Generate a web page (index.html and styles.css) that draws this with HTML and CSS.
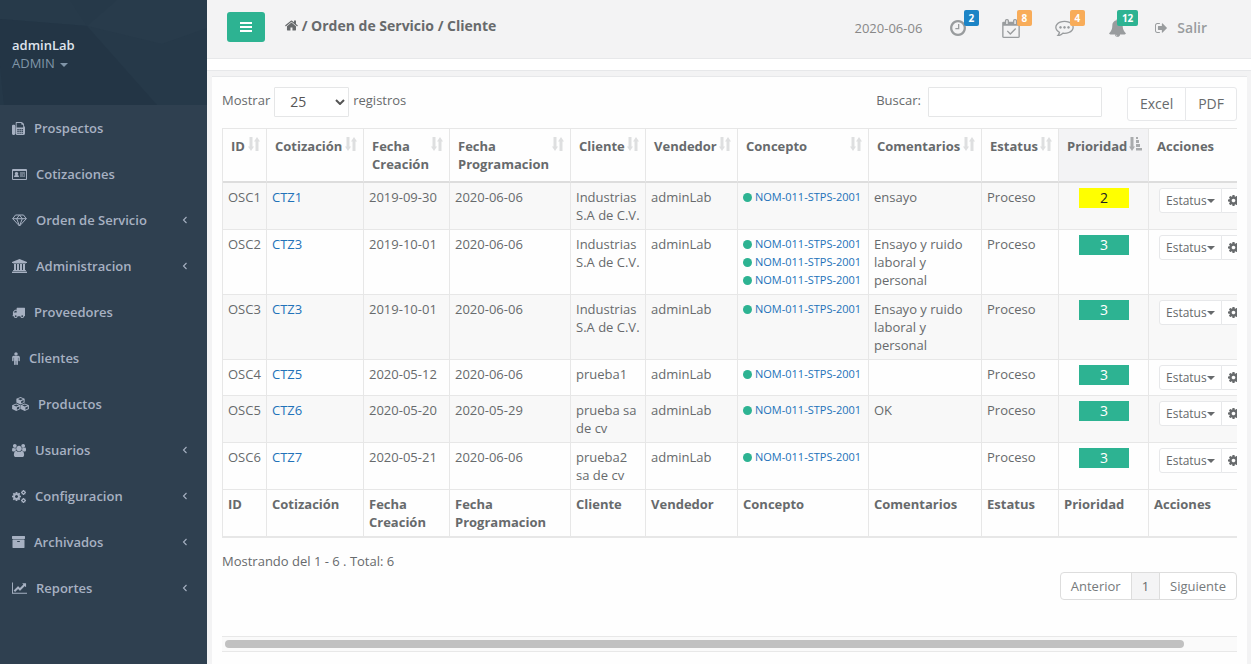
FILE: index.html
```html
<!DOCTYPE html>
<html lang="es">
<head>
<meta charset="utf-8">
<meta name="viewport" content="width=device-width, initial-scale=1">
<title>Orden de Servicio / Cliente</title>
<link rel="stylesheet" href="styles.css">
</head>
<body>
<svg class="sprite" aria-hidden="true">
  <symbol id="i-sort" viewBox="0 0 12 14"><path d="M1.500 0h3v9.500H6l-3 4.500-3-4.500h1.500zM7.500 14V4.500H6L9 0l3 4.500h-1.500V14z"/></symbol>
  <symbol id="i-sorted" viewBox="0 0 13 14"><path d="M1.500 0h3v9.500H6l-3 4.500-3-4.500h1.500zM7 0h2v2H7zM7 3h3v3H7zM7 7h4v3H7zM7 11h6v2.500H7z"/></symbol>
  <symbol id="i-cog" viewBox="128 128 1536 1536"><path d="M1152 896q0-106-75-181t-181-75-181 75-75 181 75 181 181 75 181-75 75-181zm512-109v222q0 12-8 23t-20 13l-185 28q-19 54-39 91 35 50 107 138 10 12 10 25t-9 23q-27 37-99 108t-94 71q-12 0-26-9l-138-108q-44 23-91 38-16 136-29 186-7 28-36 28h-222q-14 0-24.500-8.500t-11.500-21.500l-28-184q-49-16-90-37l-141 107q-10 9-25 9-14 0-25-11-126-114-165-168-7-10-7-23 0-12 8-23 15-21 51-66.500t54-70.500q-27-50-41-99l-183-27q-13-2-21-12.500t-8-23.500v-222q0-12 8-23t19-13l186-28q14-46 39-92-40-57-107-138-10-12-10-24 0-10 9-23 26-36 98.500-107.500t94.500-71.500q13 0 26 10l138 107q44-23 91-38 16-136 29-186 7-28 36-28h222q14 0 24.500 8.500t11.500 21.500l28 184q49 16 90 37l142-107q9-9 24-9 13 0 25 10 129 119 165 170 7 8 7 22 0 12-8 23-15 21-51 66.500t-54 70.500q26 50 41 98l183 28q13 2 21 12.500t8 23.500z"/></symbol>
  <symbol id="i-left" viewBox="0 0 6 8"><path d="M4.500 1L1.500 4l3 3" fill="none" stroke="currentColor" stroke-width="1.100"/></symbol>
</svg>

<div class="app">
  <nav class="sidebar" aria-label="Principal">
    <div class="profile">
      <svg class="profile-bg" viewBox="0 0 207 105" preserveAspectRatio="none" aria-hidden="true">
        <path fill="#263949" d="M0 0h207v105H0z"/>
        <path fill="#283b4b" d="M117 0h90v28l-45 16-75-18z"/>
        <path fill="#273a4a" d="M0 0h70l17 26-87-7z"/>
        <path fill="#233545" d="M0 19l87 7 70 79H0z"/>
        <path fill="#253848" d="M0 66l4 39H0z"/>
      </svg>
      <a href="#" class="profile-link"><strong>adminLab</strong><span>ADMIN <i class="caret"></i></span></a>
    </div>
    <ul class="menu">
      <li><a href="#"><svg width="13" height="13" viewBox="0 0 1792 1792"><path fill-rule="evenodd" d="M160 384h128q160 0 160 160v1088q0 160-160 160H160Q0 1792 0 1632V544Q0 384 160 384zM1664 547q128 75 128 221v768q0 256-256 256H672q-160 0-160-160V96q0-96 96-96h672q80 0 164 68l152 152q68 84 68 164zM640 128v640h896V384h-160q-96 0-96-96V128zM736 960v160h192V960zM1024 960v160h192V960zM1312 960v160h192V960zM736 1216v160h192v-160zM1024 1216v160h192v-160zM1312 1216v160h192v-160zM736 1472v160h192v-160zM1024 1472v160h192v-160zM1312 1472v160h192v-160z"/></svg><span>Prospectos</span></a></li>
      <li><a href="#"><svg width="15" height="11" viewBox="0 0 15 11"><path fill-rule="evenodd" d="M1 0h13a1 1 0 0 1 1 1v9a1 1 0 0 1-1 1H1a1 1 0 0 1-1-1V1a1 1 0 0 1 1-1zM1 2v8h13V2zM2 8q0-2 1.500-2Q2.600 5.200 2.800 4.200 3.200 3 4.500 3T6.200 4.200Q6.400 5.200 5.500 6 7 6 7 8zM8 3.500h5v1H8zM8 5.500h3v1H8zM11.500 5.500H13v1h-1.500zM8 7.500h5v.6H8z"/></svg><span>Cotizaciones</span></a></li>
      <li><a href="#"><svg width="15" height="13" viewBox="0 0 15 13"><path d="M3.500 1h8L14.300 4.700 7.500 12 .7 4.700zM.7 4.700h13.600M7.500 1L4.700 4.700 7.500 12l2.800-7.300z" fill="none" stroke="currentColor" stroke-linejoin="round"/></svg><span>Orden de Servicio</span><svg class="arrow" width="6" height="8"><use href="#i-left"/></svg></a></li>
      <li><a href="#"><svg width="15" height="14" viewBox="0 128 1920 1792"><path d="M960 128l960 384v128h-128q0 26-20.500 45t-48.500 19H197q-28 0-48.500-19T128 640H0V512zM256 768h256v768h128V768h256v768h128V768h256v768h128V768h256v768h59q28 0 48.500 19t20.500 45v64H128v-64q0-26 20.500-45t48.500-19h59zM1851 1728q28 0 48.500 19t20.500 45v128H0v-128q0-26 20.500-45t48.500-19z"/></svg><span>Administracion</span><svg class="arrow" width="6" height="8"><use href="#i-left"/></svg></a></li>
      <li><a href="#"><svg width="13" height="13" viewBox="0 0 1792 1792"><path d="M640 1408q0-52-38-90t-90-38-90 38-38 90 38 90 90 38 90-38 38-90zm-384-512h384V640H482q-13 0-22 9L265 844q-9 9-9 22v30zm1280 512q0-52-38-90t-90-38-90 38-38 90 38 90 90 38 90-38 38-90zm256-1088v1024q0 15-4 26.500t-13.500 18.500-16.500 11.500-23.500 6-22.500 2-25.500 0-22.500-.5q0 106-75 181t-181 75-181-75-75-181H768q0 106-75 181t-181 75-181-75-75-181h-64q-3 0-22.500.5t-25.500 0-22.500-2-23.500-6-16.500-11.500-13.500-18.500-4-26.500q0-26 19-45t45-19V960q0-8-.5-35t0-38 2.500-34.500 6.500-37 14-30.500 22.500-30l198-198q19-19 50.500-32t58.500-13h160V320q0-26 19-45t45-19h1024q26 0 45 19t19 45z"/></svg><span>Proveedores</span></a></li>
      <li><a href="#"><svg width="8" height="13" viewBox="0 128 1024 1728"><path d="M1024 832v416q0 40-28 68t-68 28-68-28-28-68V896h-64v848q0 46-33 79t-79 33-79-33-33-79v-464h-64v464q0 46-33 79t-79 33-79-33-33-79V896h-64v352q0 40-28 68t-68 28-68-28-28-68V832q0-80 56-136t136-56h640q80 0 136 56t56 136zM736 384q0 93-65.500 158.500T512 608t-158.500-65.500T288 384t65.500-158.500T512 160t158.500 65.500T736 384z"/></svg><span>Clientes</span></a></li>
      <li><a href="#"><svg width="17" height="14" viewBox="0 0 16 13"><g fill-rule="evenodd"><path id="cube" d="M8 0l3.900 1.600v3.600L8 7 4.100 5.200V1.600zM5.600 1.900L8 2.900l2.400-1L8 .9zM8.600 3.800v2l2.300-1V2.800z"/><use href="#cube" x="-4" y="6"/><use href="#cube" x="4" y="6"/></g></svg><span>Productos</span></a></li>
      <li><a href="#"><svg width="14" height="13" viewBox="64 0 1920 1792"><path d="M657 896q-162 5-265 128H258q-82 0-138-40.500T64 865q0-353 124-353 6 0 43.500 21t97.500 42.500T448 597q67 0 133-23-5 37-5 66 0 137 81 256zm1071 637q0 120-73 189.500t-194 69.500H587q-121 0-194-69.500T320 1533q0-53 3.500-103.500t14-109T364 1212t43-97.500 62-81 85.500-53.500T666 960q10 0 43 21.500t73 48 107 48 135 21.500 135-21.500 107-48 73-48 43-21.500q61 0 111.500 20t85.500 53.500 62 81 43 97.500 26.500 108.500 14 109 3.500 103.500zM704 256q0 106-75 181t-181 75-181-75-75-181 75-181T448 0t181 75 75 181zm704 384q0 159-112.500 271.500T1024 1024 752.500 911.500 640 640t112.500-271.500T1024 256t271.500 112.500T1408 640zm576 225q0 78-56 118.500t-138 40.500h-134q-103-123-265-128 93-129 93-290 0-29-5-66 66 23 133 23 59 0 119-21.500t97.500-42.500 43.500-21q124 0 124 353zm-128-609q0 106-75 181t-181 75-181-75-75-181 75-181 181-75 181 75 75 181z"/></svg><span>Usuarios</span><svg class="arrow" width="6" height="8"><use href="#i-left"/></svg></a></li>
      <li><a href="#"><svg width="14" height="13" viewBox="0 0 14 13"><use href="#i-cog" x="0" y="2" width="9" height="9"/><use href="#i-cog" x="9" y="0" width="5" height="5"/><use href="#i-cog" x="9" y="8" width="5" height="5"/></svg><span>Configuracion</span><svg class="arrow" width="6" height="8"><use href="#i-left"/></svg></a></li>
      <li><a href="#"><svg width="13" height="12" viewBox="64 128 1664 1536"><path d="M1088 832q0-26-19-45t-45-19H768q-26 0-45 19t-19 45 19 45 45 19h256q26 0 45-19t19-45zm576-192v960q0 26-19 45t-45 19H192q-26 0-45-19t-19-45V640q0-26 19-45t45-19h1408q26 0 45 19t19 45zm64-448v256q0 26-19 45t-45 19H128q-26 0-45-19t-19-45V192q0-26 19-45t45-19h1536q26 0 45 19t19 45z"/></svg><span>Archivados</span><svg class="arrow" width="6" height="8"><use href="#i-left"/></svg></a></li>
      <li><a href="#"><svg width="15" height="12" viewBox="0 128 2048 1536"><path d="M2048 1536v128H0V128h128v1408zM1920 288v435q0 21-19.500 29.500T1865 745l-121-121-633 633q-10 10-23 10t-23-10l-233-233-416 416-192-192 585-585q10-10 23-10t23 10l233 233 464-464-121-121q-16-16-7.500-35.500T1453 256h435q14 0 23 9t9 23z"/></svg><span>Reportes</span><svg class="arrow" width="6" height="8"><use href="#i-left"/></svg></a></li>
    </ul>
  </nav>

  <div class="page">
    <header class="topbar">
      <button class="toggle" type="button" aria-label="Menú"><svg width="12" height="10" viewBox="0 0 12 10"><path d="M0 0h12v2H0zM0 4h12v2H0zM0 8h12v2H0z"/></svg></button>
      <h1 class="crumb"><svg width="13" height="11" viewBox="70 250 1660 1290"><path d="M1472 992v480q0 26-19 45t-45 19h-384v-384H768v384H384q-26 0-45-19t-19-45V992l1-6 575-474 575 474q1 2 1 6zm223-69l-62 74q-8 9-21 11h-3q-13 0-21-7L896 424l-692 577q-12 8-24 7-13-2-21-11l-62-74q-8-10-7-23.500t11-21.500l719-599q32-26 76-26t76 26l244 204V288q0-14 9-23t23-9h192q14 0 23 9t9 23v408l219 182q10 8 11 21.500t-7 23.500z"/></svg> / Orden de Servicio / Cliente</h1>
      <div class="topnav">
        <span class="date">2020-06-06</span>
        <a href="#" class="notice" aria-label="Pendientes"><svg width="16" height="16" viewBox="128 128 1536 1536"><path d="M1024 544v448q0 14-9 23t-23 9H672q-14 0-23-9t-9-23v-64q0-14 9-23t23-9h224V544q0-14 9-23t23-9h64q14 0 23 9t9 23zm416 352q0-148-73-273t-198-198-273-73-273 73-198 198-73 273 73 273 198 198 273 73 273-73 198-198 73-273zm224 0q0 209-103 385.500T1281.500 1561 896 1664t-385.500-103T231 1281.500 128 896t103-385.500T510.500 231 896 128t385.500 103T1561 510.500 1664 896z"/></svg><b class="badge blue">2</b></a>
        <a href="#" class="notice" aria-label="Calendario"><svg width="18" height="19" viewBox="0 0 1664 1792"><path d="M1303 964l-512 512q-10 9-23 9t-23-9l-288-288q-9-10-9-23t9-22l46-46q9-9 22-9t23 9l220 220 444-444q10-9 23-9t22 9l46 46q9 9 9 22t-9 23zM128 1664h1408V640H128zM512 448V160q0-14-9-23t-23-9h-64q-14 0-23 9t-9 23v288q0 14 9 23t23 9h64q14 0 23-9t9-23zm768 0V160q0-14-9-23t-23-9h-64q-14 0-23 9t-9 23v288q0 14 9 23t23 9h64q14 0 23-9t9-23zm384-64v1280q0 52-38 90t-90 38H128q-52 0-90-38t-38-90V384q0-52 38-90t90-38h128v-96q0-66 47-113T416 0h64q66 0 113 47t47 113v96h384v-96q0-66 47-113t113-47h64q66 0 113 47t47 113v96h128q52 0 90 38t38 90z"/></svg><b class="badge orange">8</b></a>
        <a href="#" class="notice" aria-label="Mensajes"><svg width="19" height="16" viewBox="0 192 1792 1536"><path d="M640 896q0 53-37.500 90.500T512 1024t-90.500-37.500T384 896t37.500-90.500T512 768t90.500 37.500T640 896zm384 0q0 53-37.500 90.500T896 1024t-90.500-37.500T768 896t37.500-90.500T896 768t90.500 37.500T1024 896zm384 0q0 53-37.500 90.500T1280 1024t-90.500-37.500T1152 896t37.500-90.500T1280 768t90.500 37.500T1408 896zM896 384q-204 0-381.500 69.500t-282 187.500T128 896q0 112 71.500 213.500T401 1285l87 50-27 96q-24 91-70 172 152-63 275-171l43-38 57 6q69 8 130 8 204 0 381.500-69.500t282-187.500T1664 896t-104.500-255-282-187.500T896 384zm896 512q0 174-120 321.500t-326 233T896 1536q-70 0-145-8-198 175-460 242-49 14-114 22h-5q-15 0-27-10.500t-16-27.500v-1q-3-4-.5-12t2-10 4.500-9.500l6-9 7-8.500 8-9q7-8 31-34.500t34.500-38 31-39.500 32.500-51 27-59 26-76q-157-89-247.500-220T0 896q0-174 120-321.500t326-233T896 256t450 85.500 326 233T1792 896z"/></svg><b class="badge orange">4</b></a>
        <a href="#" class="notice" aria-label="Notificaciones"><svg width="17" height="18" viewBox="64 0 1664 1792"><path d="M912 1696q0-16-16-16-59 0-101.500-42.500T752 1536q0-16-16-16t-16 16q0 73 51.500 124.500T896 1712q16 0 16-16zm816-288q0 52-38 90t-90 38h-448q0 106-75 181t-181 75-181-75-75-181H192q-52 0-90-38t-38-90q50-42 91-88t85-119.500 74.500-158.500 50-206 19.500-260q0-152 117-282.500T808 135q-8-19-8-39 0-40 28-68t68-28 68 28 28 68q0 20-8 39 190 28 307 158.500T1408 576q0 139 19.500 260t50 206 74.500 158.500 85 119.500 91 88z"/></svg><b class="badge green">12</b></a>
        <a href="#" class="logout"><svg width="12" height="10" viewBox="64 256 1568 1280"><path d="M704 1440q0 4 1 20t.5 26.500-3 23.500-10 19.500-20.500 6.500H352q-119 0-203.500-84.500T64 1248V544q0-119 84.500-203.500T352 256h320q13 0 22.500 9.500T704 288q0 4 1 20t.5 26.500-3 23.500-10 19.500-20.500 6.500H352q-66 0-113 47t-47 113v704q0 66 47 113t113 47h312l11.500 1 11.500 3 8 5.500 7 9 2 13.500zm928-544q0 26-19 45l-544 544q-19 19-45 19t-45-19-19-45v-288H512q-26 0-45-19t-19-45V704q0-26 19-45t45-19h448V352q0-26 19-45t45-19 45 19l544 544q19 19 19 45z"/></svg>Salir</a>
      </div>
    </header>
    <div class="strip"></div>

    <main class="panel">
      <div class="toolbar">
        <div class="length"><label for="len">Mostrar</label>
          <span class="select"><select id="len"><option>25</option><option>50</option></select><svg width="10" height="6" viewBox="0 0 10 6"><path d="M1 1l4 4 4-4" fill="none" stroke="currentColor" stroke-width="2"/></svg></span>
          <span>registros</span></div>
        <div class="tools">
          <div class="search"><label for="q">Buscar:</label><input id="q" type="search"></div>
          <div class="export"><button type="button">Excel</button><button type="button">PDF</button></div>
        </div>
      </div>

      <div class="scroller">
        <table>
          <colgroup><col class="c-id"><col class="c-cot"><col class="c-cre"><col class="c-pro"><col class="c-cli"><col class="c-ven"><col class="c-con"><col class="c-com"><col class="c-est"><col class="c-pri"><col></colgroup>
          <thead><tr>
            <th><div>ID<svg class="sort"><use href="#i-sort"/></svg></div></th>
            <th><div>Cotización<svg class="sort"><use href="#i-sort"/></svg></div></th>
            <th><div>Fecha Creación<svg class="sort"><use href="#i-sort"/></svg></div></th>
            <th><div>Fecha Programacion<svg class="sort"><use href="#i-sort"/></svg></div></th>
            <th><div>Cliente<svg class="sort"><use href="#i-sort"/></svg></div></th>
            <th><div>Vendedor<svg class="sort"><use href="#i-sort"/></svg></div></th>
            <th><div>Concepto<svg class="sort"><use href="#i-sort"/></svg></div></th>
            <th><div>Comentarios<svg class="sort"><use href="#i-sort"/></svg></div></th>
            <th><div>Estatus<svg class="sort"><use href="#i-sort"/></svg></div></th>
            <th class="sorted"><div>Prioridad<svg class="sort active"><use href="#i-sorted"/></svg></div></th>
            <th><div>Acciones</div></th>
          </tr></thead>
          <tbody>
            <tr><td>OSC1</td><td><a href="#">CTZ1</a></td><td>2019-09-30</td><td>2020-06-06</td><td>Industrias S.A de C.V.</td><td>adminLab</td><td><a href="#" class="norm">NOM-011-STPS-2001</a></td><td>ensayo</td><td>Proceso</td><td><span class="prio medium">2</span></td><td><div class="actions"><button type="button">Estatus<i class="caret"></i></button><button type="button" aria-label="Opciones"><svg width="11" height="11"><use href="#i-cog"/></svg></button></div></td></tr>
            <tr><td>OSC2</td><td><a href="#">CTZ3</a></td><td>2019-10-01</td><td>2020-06-06</td><td>Industrias S.A de C.V.</td><td>adminLab</td><td><a href="#" class="norm">NOM-011-STPS-2001</a><a href="#" class="norm">NOM-011-STPS-2001</a><a href="#" class="norm">NOM-011-STPS-2001</a></td><td>Ensayo y ruido laboral y personal</td><td>Proceso</td><td><span class="prio">3</span></td><td><div class="actions"><button type="button">Estatus<i class="caret"></i></button><button type="button" aria-label="Opciones"><svg width="11" height="11"><use href="#i-cog"/></svg></button></div></td></tr>
            <tr><td>OSC3</td><td><a href="#">CTZ3</a></td><td>2019-10-01</td><td>2020-06-06</td><td>Industrias S.A de C.V.</td><td>adminLab</td><td><a href="#" class="norm">NOM-011-STPS-2001</a></td><td>Ensayo y ruido laboral y personal</td><td>Proceso</td><td><span class="prio">3</span></td><td><div class="actions"><button type="button">Estatus<i class="caret"></i></button><button type="button" aria-label="Opciones"><svg width="11" height="11"><use href="#i-cog"/></svg></button></div></td></tr>
            <tr><td>OSC4</td><td><a href="#">CTZ5</a></td><td>2020-05-12</td><td>2020-06-06</td><td>prueba1</td><td>adminLab</td><td><a href="#" class="norm">NOM-011-STPS-2001</a></td><td></td><td>Proceso</td><td><span class="prio">3</span></td><td><div class="actions"><button type="button">Estatus<i class="caret"></i></button><button type="button" aria-label="Opciones"><svg width="11" height="11"><use href="#i-cog"/></svg></button></div></td></tr>
            <tr><td>OSC5</td><td><a href="#">CTZ6</a></td><td>2020-05-20</td><td>2020-05-29</td><td>prueba sa de cv</td><td>adminLab</td><td><a href="#" class="norm">NOM-011-STPS-2001</a></td><td>OK</td><td>Proceso</td><td><span class="prio">3</span></td><td><div class="actions"><button type="button">Estatus<i class="caret"></i></button><button type="button" aria-label="Opciones"><svg width="11" height="11"><use href="#i-cog"/></svg></button></div></td></tr>
            <tr><td>OSC6</td><td><a href="#">CTZ7</a></td><td>2020-05-21</td><td>2020-06-06</td><td>prueba2 sa de cv</td><td>adminLab</td><td><a href="#" class="norm">NOM-011-STPS-2001</a></td><td></td><td>Proceso</td><td><span class="prio">3</span></td><td><div class="actions"><button type="button">Estatus<i class="caret"></i></button><button type="button" aria-label="Opciones"><svg width="11" height="11"><use href="#i-cog"/></svg></button></div></td></tr>
          </tbody>
          <tfoot><tr><th>ID</th><th>Cotización</th><th>Fecha Creación</th><th>Fecha Programacion</th><th>Cliente</th><th>Vendedor</th><th>Concepto</th><th>Comentarios</th><th>Estatus</th><th>Prioridad</th><th>Acciones</th></tr></tfoot>
        </table>
      </div>

      <p class="info">Mostrando del 1 - 6 . Total: 6</p>
      <nav class="pager" aria-label="Paginación"><a href="#">Anterior</a><a href="#" class="current">1</a><a href="#">Siguiente</a></nav>
      <div class="track"><div class="thumb"></div></div>
    </main>
  </div>
</div>
</body>
</html>
```
FILE: styles.css
```css
* { box-sizing: border-box; }
body {
  margin: 0;
  background: #f3f3f4;
  color: #676a6c;
  font: 13px/18px "Open Sans", sans-serif;
}
a { color: #2272b9; text-decoration: none; }
button, input, select { font-family: inherit; color: inherit; margin: 0; }
svg { fill: currentColor; flex: none; }
.sprite { position: absolute; width: 0; height: 0; }
.caret {
  display: inline-block;
  border: 4px solid transparent;
  border-top-color: currentColor;
  border-bottom: 0;
  vertical-align: middle;
}

.app { display: flex; min-height: 100vh; }

/* Sidebar */
.sidebar { flex: 0 0 207px; background: #2f4050; }
.profile { position: relative; height: 105px; padding: 36px 12px 0; }
.profile-bg { position: absolute; inset: 0; width: 100%; height: 100%; }
.profile-link { position: relative; display: flex; flex-direction: column; color: #8095a8; }
.profile-link strong { color: #dfe4ed; font-weight: 600; }
.profile-link .caret { margin-left: 2px; }
.menu { list-style: none; margin: 0; padding: 0; }
.menu a {
  display: flex;
  align-items: center;
  gap: 9px;
  height: 46px;
  padding: 0 19px 0 12px;
  color: #a7b1c2;
  font-weight: 600;
}
.menu .arrow { margin-left: auto; }

/* Top bar */
.page { flex: 1; min-width: 0; display: flex; flex-direction: column; }
.topbar {
  display: flex;
  align-items: flex-start;
  min-height: 59px;
  padding: 12px 44px 0 20px;
  border-bottom: 1px solid #e7e8ea;
}
.toggle {
  display: flex;
  align-items: center;
  justify-content: center;
  width: 38px;
  height: 30px;
  border: 0;
  border-radius: 3px;
  background: #2db392;
  color: #fff;
}
.crumb { margin: 4px 0 0 20px; font-size: 14px; line-height: 20px; font-weight: 700; }
.topnav {
  display: flex;
  align-items: center;
  gap: 33px;
  height: 32px;
  margin-left: auto;
  color: #999c9e;
  font-size: 14px;
}
.date { margin-right: -7px; color: #888; font-size: 13px; }
.notice { position: relative; display: flex; justify-content: center; width: 20px; color: #999c9e; }
.badge {
  position: absolute;
  right: -11px;
  bottom: 60%;
  padding: 0 5px;
  border-radius: 2px;
  color: #fff;
  font-size: 10px;
  line-height: 16px;
  font-weight: 700;
}
.blue { background: #1c84c6; }
.orange { background: #f8ac59; }
.green { background: #2db392; }
.logout { display: flex; align-items: center; gap: 10px; margin-left: -5px; color: #999c9e; font-weight: 600; }
.strip { height: 12px; background: #fff; border-bottom: 1px solid #e7e8ea; }

/* Panel */
.panel {
  flex: 1;
  margin: 5px 4px 0 5px;
  padding: 10px 10px 13px;
  border-top: 1px solid #e7e8ea;
  background: #fefefe;
}
.toolbar { display: flex; justify-content: space-between; margin-bottom: 7px; }
.length { display: flex; gap: 4px; line-height: 26px; }
.select { position: relative; display: block; color: #555; }
.select svg { position: absolute; right: 4px; top: 12px; pointer-events: none; }
.select select {
  appearance: none;
  width: 75px;
  height: 30px;
  padding: 0 15px 2px;
  border: 1px solid #e5e6e7;
  border-radius: 1px;
  background: #fff;
  font-size: 14px;
}
.tools { display: flex; gap: 25px; }
.search { display: flex; gap: 7px; line-height: 26px; }
.search input {
  width: 174px;
  height: 30px;
  padding: 0 10px;
  border: 1px solid #e5e6e7;
  border-radius: 1px;
  background: #fff;
  font-size: 13px;
}
.export { display: flex; }
.export button {
  height: 34px;
  padding: 0 12px 2px;
  border: 1px solid #e7e8ea;
  background: #fff;
  font-size: 14px;
}
.export button:first-child { border-radius: 3px 0 0 3px; }
.export button:last-child { margin-left: -1px; border-radius: 0 3px 3px 0; }

/* Table */
.scroller { overflow: hidden; }
table {
  width: 100%;
  min-width: 1068px;
  table-layout: fixed;
  border-collapse: separate;
  border-spacing: 0;
  border: solid #e7e7e7;
  border-width: 1px 0 1px 1px;
}
.c-id { width: 44px; }
.c-cot { width: 97px; }
.c-cre { width: 86px; }
.c-pro { width: 121px; }
.c-cli { width: 75px; }
.c-ven { width: 92px; }
.c-con { width: 131px; }
.c-com { width: 113px; }
.c-est { width: 77px; }
.c-pri { width: 90px; }
th, td {
  padding: 5px 4px 5px 5px;
  border: solid #e7e7e7;
  border-width: 0 1px 1px 0;
  text-align: left;
  vertical-align: top;
}
th { font-weight: 700; }
thead th { padding: 8px 6px 8px 8px; border-bottom: 2px solid #ddd; }
thead th div { display: flex; justify-content: space-between; }
.sort { width: 12px; height: 14px; color: #dedfe0; }
.sort.active { width: 13px; color: #a9abad; }
.sorted { background: #f3f3f5; }
tbody tr:nth-child(odd) { background: #f8f8f8; }
.norm { display: flex; align-items: center; gap: 3px; font-size: 11px; white-space: nowrap; }
.norm::before { content: ""; width: 9px; height: 9px; border-radius: 50%; background: #2db392; }
.prio {
  display: block;
  width: 50px;
  margin: 0 auto;
  background: #2db392;
  color: #fff;
  font-size: 14px;
  line-height: 20px;
  text-align: center;
}
.prio.medium { background: #ff0; color: #222; }
.actions { display: flex; padding-left: 5px; }
.actions button {
  display: flex;
  align-items: center;
  height: 25px;
  padding: 0 6px;
  border: 1px solid #e7e8ea;
  background: #fff;
  font-size: 12px;
}
.actions button:first-child { border-radius: 3px 0 0 3px; }
.actions button:last-child { margin-left: -1px; border-radius: 0 3px 3px 0; }

/* Footer of the list */
.info { margin: 14px 0 2px; }
.pager { display: flex; width: fit-content; margin-left: auto; }
.pager a { padding: 4px 10px; border: 1px solid #ddd; background: #fff; color: #767a7c; }
.pager a + a { margin-left: -1px; }
.pager a:first-child { border-radius: 4px 0 0 4px; }
.pager a:last-child { border-radius: 0 4px 4px 0; }
.pager .current { background: #f4f4f5; color: #676a6c; }
.track {
  margin-top: 36px;
  padding: 3px;
  border: solid #e8e8e8;
  border-width: 1px 0;
  background: #fafafa;
}
.thumb { width: 95%; height: 8px; border-radius: 4px; background: #c1c1c1; }
```
